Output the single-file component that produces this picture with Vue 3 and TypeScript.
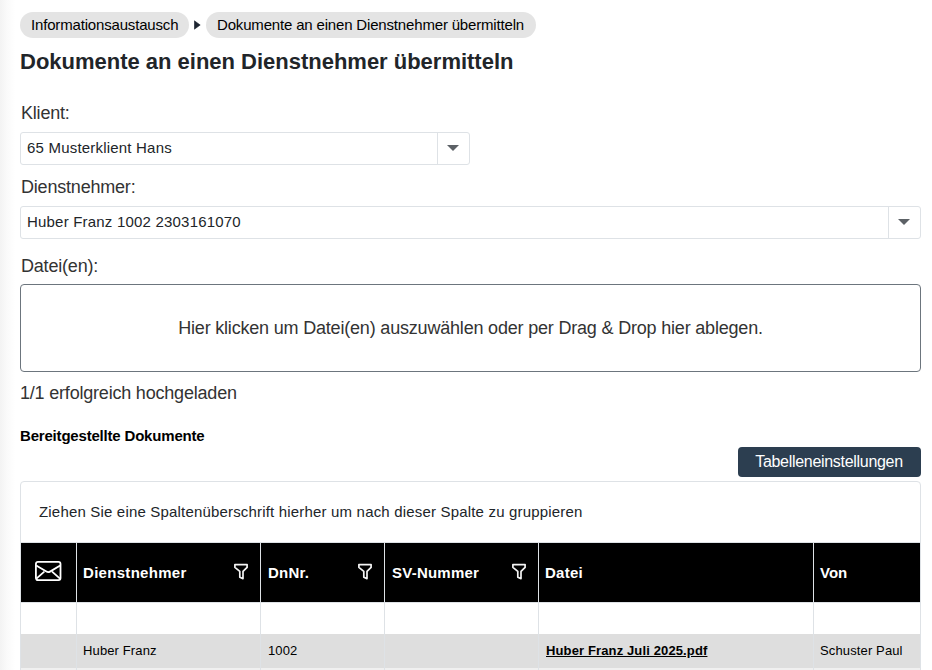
<script setup lang="ts">
interface Column {
  key: string
  label: string
  filter: boolean
}

const crumbs: string[] = ['Informationsaustausch', 'Dokumente an einen Dienstnehmer übermitteln']

const columns: Column[] = [
  { key: 'name', label: 'Dienstnehmer', filter: true },
  { key: 'nr', label: 'DnNr.', filter: true },
  { key: 'sv', label: 'SV-Nummer', filter: true },
  { key: 'file', label: 'Datei', filter: false },
  { key: 'from', label: 'Von', filter: false },
]

const row: Record<string, string> = {
  name: 'Huber Franz',
  nr: '1002',
  sv: '',
  file: 'Huber Franz Juli 2025.pdf',
  from: 'Schuster Paul',
}
</script>

<template>
  <main class="page">
    <nav class="crumbs">
      <template v-for="(c, i) in crumbs" :key="c">
        <svg v-if="i > 0" class="sep" width="7" height="10" viewBox="0 0 7 10">
          <path d="M.4 .8v8.4L6.2 5z" fill="#1c2430" stroke="#1c2430" stroke-width=".6" stroke-linejoin="round" />
        </svg>
        <span class="crumb">{{ c }}</span>
      </template>
    </nav>
    <h1>Dokumente an einen Dienstnehmer übermitteln</h1>

    <label class="label klient">Klient:</label>
    <div class="select narrow">
      <span class="value">65 Musterklient Hans</span>
      <span class="arrow"><svg width="12" height="6" viewBox="0 0 12 6"><path d="M0 0h12L6 6z" fill="#5c6166" /></svg></span>
    </div>

    <label class="label dn">Dienstnehmer:</label>
    <div class="select">
      <span class="value">Huber Franz 1002 2303161070</span>
      <span class="arrow"><svg width="12" height="6" viewBox="0 0 12 6"><path d="M0 0h12L6 6z" fill="#5c6166" /></svg></span>
    </div>

    <label class="label files">Datei(en):</label>
    <div class="drop">Hier klicken um Datei(en) auszuwählen oder per Drag &amp; Drop hier ablegen.</div>
    <p class="status">1/1 erfolgreich hochgeladen</p>

    <h2>Bereitgestellte Dokumente</h2>
    <div class="toolbar"><button type="button">Tabelleneinstellungen</button></div>

    <section class="grid">
      <div class="group">Ziehen Sie eine Spaltenüberschrift hierher um nach dieser Spalte zu gruppieren</div>
      <div class="row head">
        <div class="cell mail">
          <svg width="28" height="22" viewBox="0 0 28 22" fill="none" stroke="#fff" stroke-width="1.8" stroke-linejoin="round">
            <rect x="1.9" y="1.9" width="24.6" height="18.2" rx="2" />
            <path d="M2.2 5.4 12.4 11.6c1.2.7 2.4.7 3.6 0L26.2 5.4M2.4 18.7l7.9-7.1M26 18.7l-7.9-7.1" />
          </svg>
        </div>
        <div v-for="c in columns" :key="c.key" class="cell">
          <span :class="'h-' + c.key">{{ c.label }}</span>
          <svg v-if="c.filter" class="funnel" width="14" height="17" viewBox="0 0 14 17" fill="none" stroke="#f4f4f4" stroke-width="1.7" stroke-linejoin="round">
            <path d="M.9 1.6h12.2v2.8L9 8.4v7.2l-3.2-1.3V8.4L.9 4.4z" />
          </svg>
        </div>
      </div>
      <div class="row filters">
        <div class="cell"></div>
        <div v-for="c in columns" :key="c.key" class="cell"></div>
      </div>
      <div class="row data">
        <div class="cell"></div>
        <div v-for="c in columns" :key="c.key" class="cell">
          <a v-if="c.key === 'file'" class="file">{{ row[c.key] }}</a>
          <span v-else>{{ row[c.key] }}</span>
        </div>
      </div>
      <div class="row next">
        <div class="cell"></div>
        <div v-for="c in columns" :key="c.key" class="cell"></div>
      </div>
    </section>
  </main>
</template>

<style>
body {
  margin: 0;
  overflow: hidden;
}
</style>

<style scoped>
* {
  box-sizing: border-box;
}
.page {
  width: 932px;
  height: 670px;
  overflow: hidden;
  padding: 12px 11px 0 20px;
  font-family: "Liberation Sans", Arial, sans-serif;
  font-size: 15px;
  color: #212529;
  background: linear-gradient(90deg, #f3f3f3 0, #fafafa 7px, #fff 15px);
  white-space: nowrap;
}
.crumbs {
  display: flex;
  align-items: center;
  height: 26px;
}
.crumb {
  height: 26px;
  line-height: 26px;
  border-radius: 13px;
  background: #e4e4e4;
  color: #000;
  padding-left: 11px;
  width: 169px;
  letter-spacing: -0.17px;
}
.crumb:last-child {
  width: 330px;
}
.sep {
  margin: 0 5px 0 5px;
  flex: none;
}
h1 {
  margin: 9px 0 0;
  height: 30px;
  line-height: 30px;
  font-size: 22px;
  font-weight: 700;
  letter-spacing: -0.01px;
}
.label {
  display: block;
  height: 24px;
  line-height: 24px;
  padding-left: 1px;
  font-size: 18px;
  color: #333;
  letter-spacing: -0.2px;
}
.klient {
  margin: 24px 0 7px;
}
.dn {
  margin: 10px 0 7px;
}
.files {
  margin: 15px 0 6px;
}
.select {
  display: flex;
  height: 33px;
  border: 1px solid #dee2e6;
  border-radius: 3px;
  background: #fff;
}
.narrow {
  width: 450px;
}
.value {
  flex: 1;
  padding-left: 6px;
  line-height: 30px;
  letter-spacing: 0.2px;
}
.arrow {
  width: 32px;
  border-left: 1px solid #dee2e6;
  display: flex;
  align-items: center;
  justify-content: center;
  padding: 0 1px 1px 0;
}
.drop {
  height: 88px;
  border: 1px solid #6c757d;
  border-radius: 4px;
  background: #fff;
  display: flex;
  align-items: center;
  justify-content: center;
  font-size: 18px;
  color: #333;
  letter-spacing: -0.19px;
}
.status {
  margin: 9px 0 0;
  height: 24px;
  line-height: 24px;
  font-size: 18px;
  color: #333;
  letter-spacing: -0.2px;
}
h2 {
  margin: 20px 0 0;
  height: 22px;
  line-height: 22px;
  font-size: 15px;
  font-weight: 700;
  color: #000;
  letter-spacing: -0.19px;
}
.toolbar {
  display: flex;
  justify-content: flex-end;
  height: 30px;
}
button {
  width: 183px;
  height: 30px;
  border: 0;
  padding: 0 1px 0 0;
  border-radius: 4px;
  background: #2c3e50;
  color: #fff;
  font: 16px "Liberation Sans", Arial, sans-serif;
  letter-spacing: -0.3px;
}
.grid {
  margin-top: 4px;
  border: 1px solid #dee2e6;
  border-radius: 4px 4px 0 0;
  background: #fff;
  overflow: hidden;
}
.group {
  height: 61px;
  line-height: 60px;
  padding-left: 18px;
  border-bottom: 1px solid #dee2e6;
  letter-spacing: 0.18px;
}
.row {
  display: grid;
  grid-template-columns: 55px 184px 124px 154px 275px 107px;
}
.cell {
  display: flex;
  align-items: center;
  justify-content: space-between;
  padding: 0 12px 0 7px;
  border-left: 1px solid #dee2e6;
}
.cell:first-child {
  border-left: 0;
}
.cell:last-child {
  padding-left: 6px;
}
.head {
  height: 60px;
  background: #000;
  color: #fff;
  font-weight: 700;
  border-bottom: 1px solid #dee2e6;
  letter-spacing: 0.24px;
}
.h-name {
  letter-spacing: 0.3px;
}
.h-from {
  letter-spacing: 0;
}
.head .cell:nth-child(2),
.data .cell:nth-child(2),
.head .cell:nth-child(5) {
  padding-left: 6px;
}
.head .mail {
  padding: 0 0 3px 13px;
}
.funnel {
  margin-bottom: 3px;
}
.filters {
  height: 31px;
}
.data {
  height: 34px;
  background: #dedede;
  color: #000;
  font-size: 13px;
  letter-spacing: 0.13px;
}
.data .cell {
  padding-bottom: 2px;
}
.next {
  height: 30px;
  background: #f0f0f0;
}
.file {
  font-weight: 700;
  text-decoration: underline;
}
</style>
